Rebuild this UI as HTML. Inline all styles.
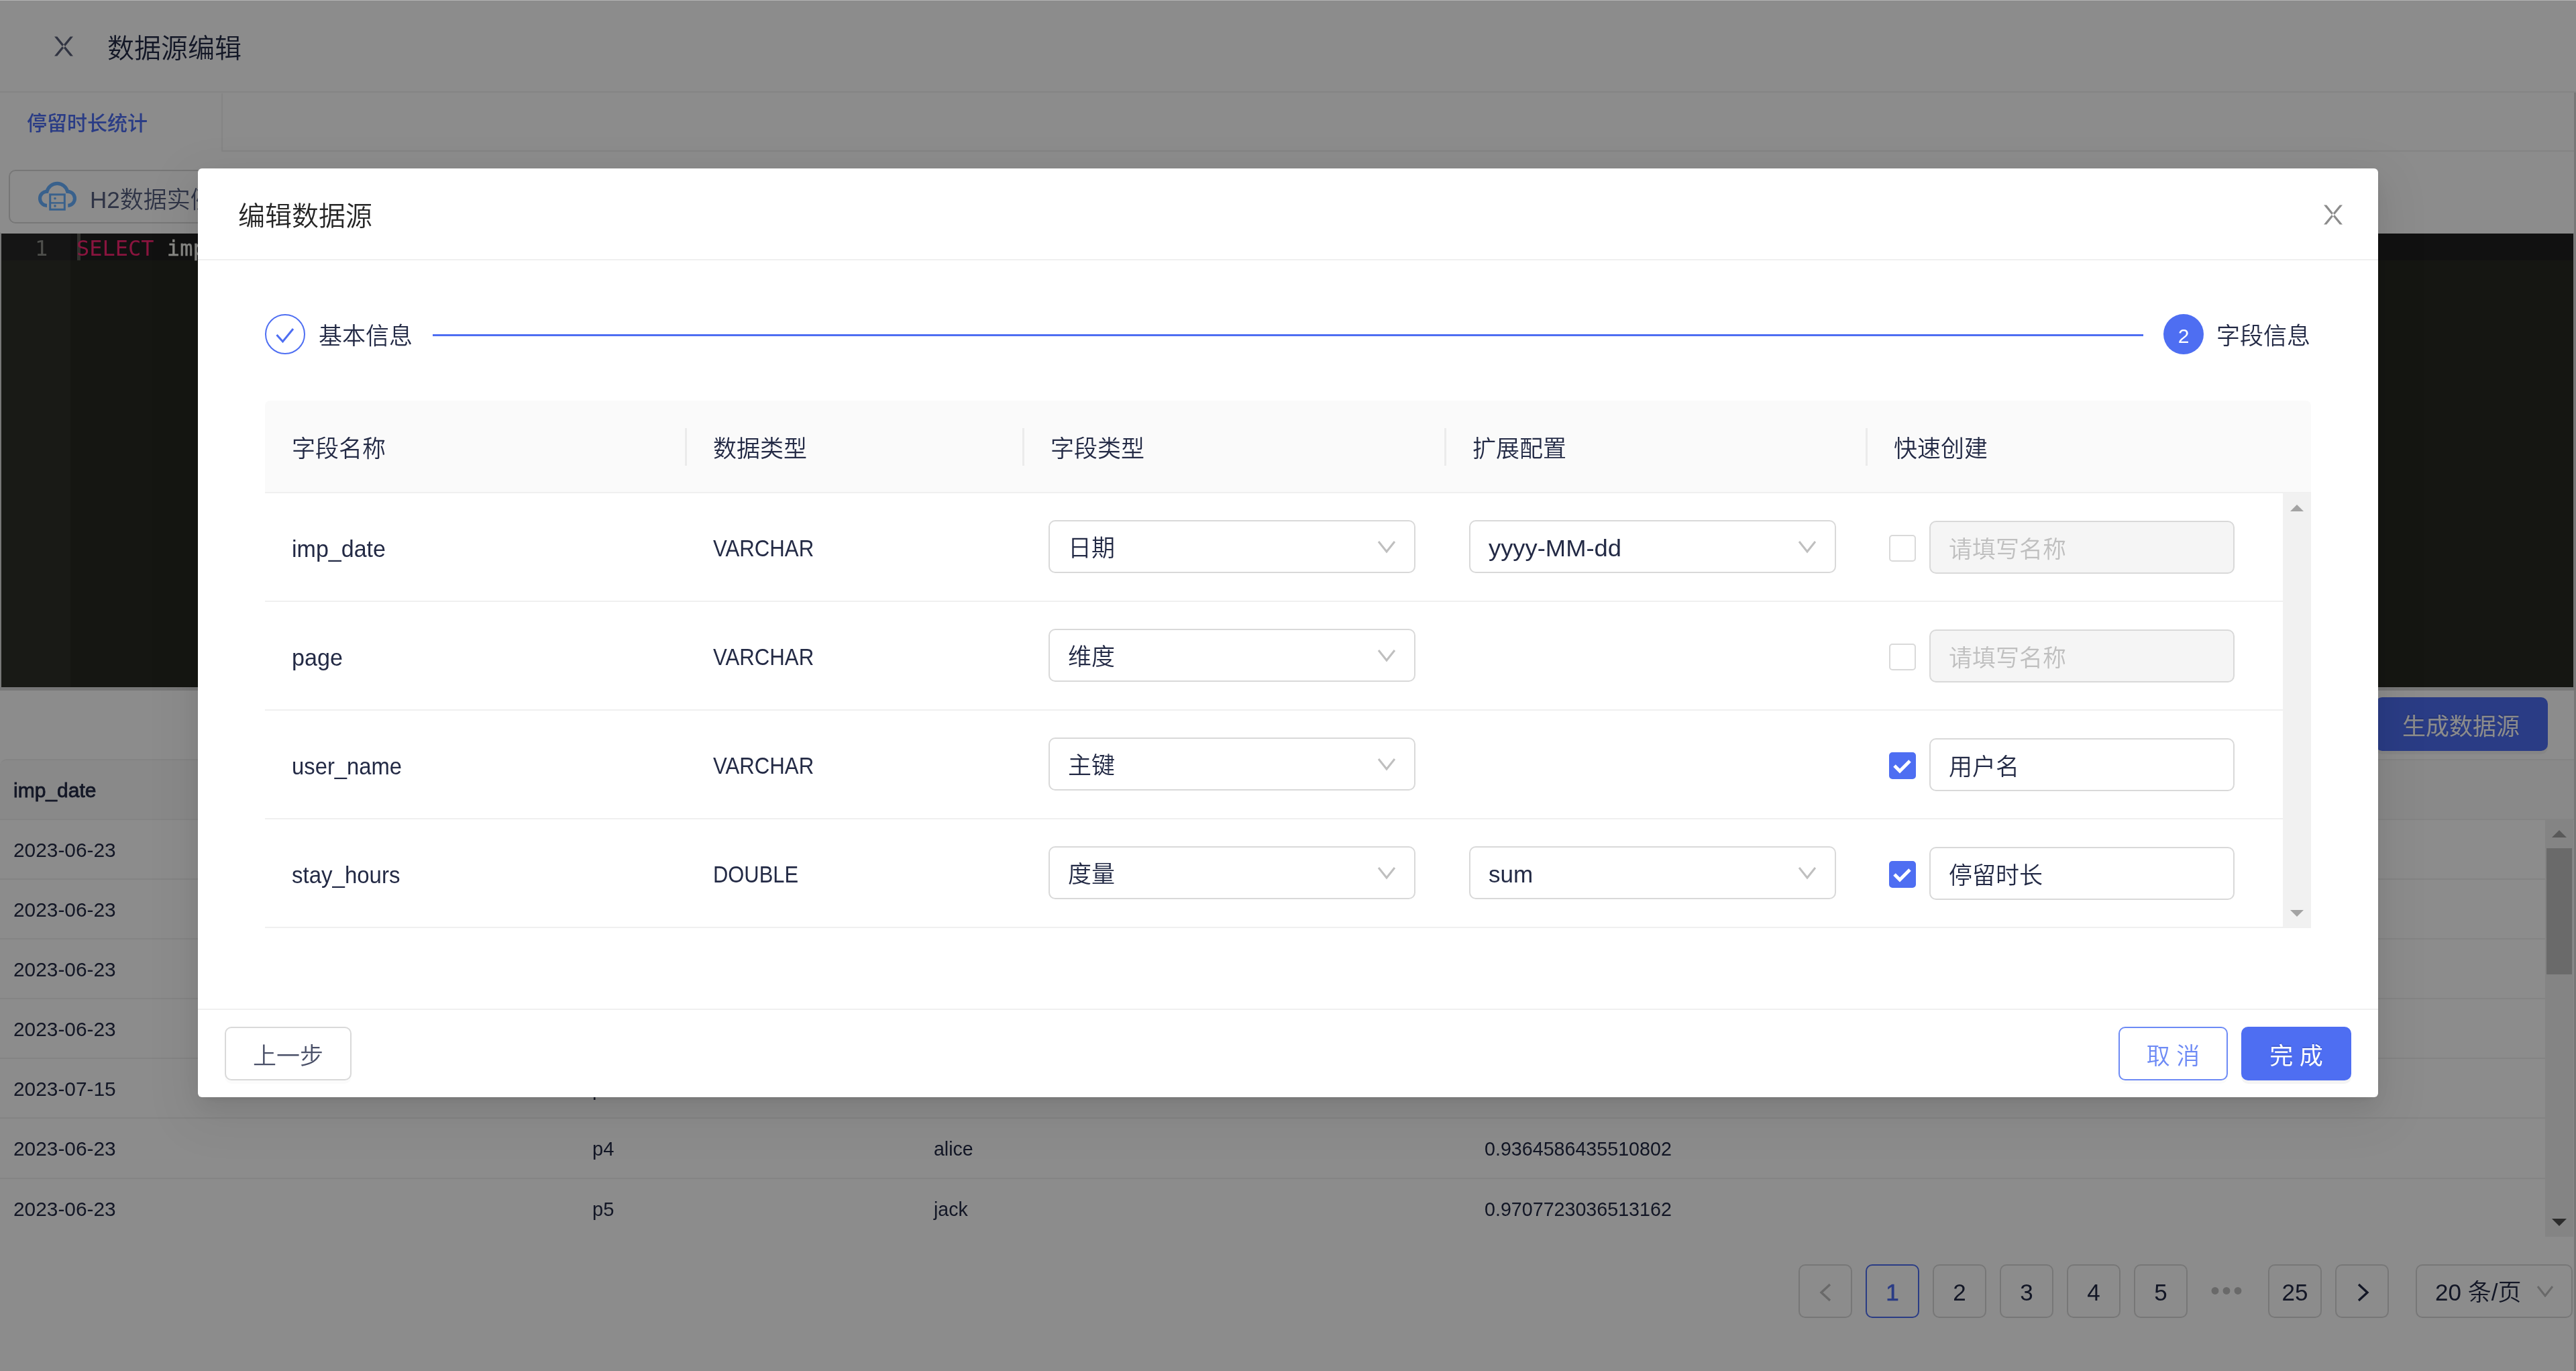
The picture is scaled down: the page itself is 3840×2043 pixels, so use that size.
<!DOCTYPE html>
<html lang="zh-CN">
<head>
<meta charset="utf-8">
<title>数据源编辑</title>
<style>
*{box-sizing:border-box;margin:0;padding:0}
html,body{width:3840px;height:2043px;overflow:hidden;background:#fff}
body{font-family:"Liberation Sans","Noto Sans CJK SC",sans-serif;color:#232a45;position:relative;font-size:35px;font-weight:350}
.abs{position:absolute}
#bg,#modal{will-change:transform}
#bg{position:absolute;left:0;top:0;width:3840px;height:2043px;background:#fff;overflow:hidden}
#mask{position:absolute;left:0;top:0;width:3840px;height:2043px;background:rgba(0,0,0,.45)}
.t{position:absolute;white-space:nowrap;line-height:1}
/* background page */
#topline{left:0;top:0;width:3840px;height:2px;background:#fff}
#hdr{left:0;top:0;width:3840px;height:138px;border-bottom:2px solid #f0f0f0;background:#fff}
#tabs .vline{left:330px;top:139px;width:2px;height:87px;background:#f0f0f0}
#tabs .hline{left:330px;top:224px;width:3510px;height:2px;background:#f0f0f0}
#dbsel{left:13px;top:253px;width:700px;height:80px;border:2px solid #d9d9d9;border-radius:10px;background:#fff}
#editor{left:-3px;top:343px;width:3844px;height:686px;border:5px solid #d9d9d9;border-top-color:#fff;background:#272822}
#editor .gutter{left:0;top:0;width:103px;height:676px;background:#2f3129}
#editor .activeline{left:103px;top:0;width:3731px;height:40px;background:#202020}
#editor .gactive{left:0;top:0;width:103px;height:40px;background:#272727}
#editor .cursor{left:113px;top:0;width:5px;height:40px;background:#5a5a55}
.mono{font-family:"DejaVu Sans Mono","Liberation Mono",monospace;font-size:32px;font-weight:400}
#genbtn{left:3541px;top:1039px;width:257px;height:80px;border-radius:10px;background:#4e6ef2;color:#fff;font-size:35px;font-weight:400;text-shadow:0 -2.5px 0 rgba(0,0,0,.12);box-shadow:0 5px 0 rgba(0,0,0,.045)}
/* bg table */
#btable{left:0;top:1131px;width:3838px;height:713px}
#btable .head{left:0;top:0;width:3837px;height:91px;background:#fafafa;border-top:2px solid #f0f0f0;border-bottom:2px solid #f0f0f0;border-radius:10px 0 0 0}
#btable .row{left:0;width:3794px;height:89px;border-bottom:2px solid #f0f0f0}
#btable .row .t,#btable .head .t{font-size:30px}
#btable .sb{left:3794px;top:90px;width:42px;height:622px;background:#f1f1f1}
#btable .thumb{left:3796px;top:133px;width:38px;height:188px;background:#c1c1c1}
.pg{position:absolute;top:1884px;width:80px;height:80px;border:2px solid #d9d9d9;border-radius:10px;background:#fff;text-align:center;line-height:80px;font-size:35px}
/* modal */
#modal{left:295px;top:251px;width:3250px;height:1384px;background:#fff;border-radius:6px;box-shadow:0 7.5px 15px -10px rgba(0,0,0,.12),0 15px 40px 0 rgba(0,0,0,.08),0 22.5px 70px 20px rgba(0,0,0,.05)}
#mhead{left:0;top:0;width:3250px;height:137px;border-bottom:2px solid #f0f0f0}
#mfoot{left:0;top:1252px;width:3250px;height:132px;border-top:2px solid #f0f0f0}
.btn{position:absolute;height:80px;border-radius:10px;border:2px solid #d9d9d9;background:#fff;text-align:center;line-height:84px;font-size:35px;box-shadow:0 5px 0 rgba(0,0,0,.016)}
#mtable{left:100px;top:346px;width:3050px;height:786px}
#mtable .th{left:0;top:0;width:3050px;height:138px;background:#fafafa;border-bottom:2px solid #f0f0f0;border-radius:8px 8px 0 0}
#mtable .sep{top:41px;width:2.5px;height:56px;background:rgba(0,0,0,.06)}
#mtable .tr{left:0;width:3008px;height:162px;border-bottom:2px solid #f0f0f0}
#mtable .sbar{left:3008px;top:138px;width:42px;height:648px;background:#f1f1f1}
.sel{position:absolute;top:40px;width:547px;height:79px;border:2px solid #d9d9d9;border-radius:10px;background:#fff}
.sel .t{left:27px;top:22px;font-size:35px}
.sel svg{position:absolute;left:488px;top:28px}
.cb{position:absolute;left:2421px;top:62px;width:40px;height:40px;border:2px solid #d9d9d9;border-radius:5px;background:#fff}
.cb.on{background:#4e6ef2;border-color:#4e6ef2}
.inp{position:absolute;left:2481px;top:41px;width:455px;height:79px;border:2px solid #d9d9d9;border-radius:10px;background:#fff}
.inp.dis{background:#f5f5f5}
.inp .t{left:27px;top:23px;font-size:35px}
.inp.dis .t{color:#bfbfbf}
</style>
</head>
<body>
<div id="bg">
  <div id="hdr" class="abs">
    <svg class="abs" style="left:81px;top:54px" width="28" height="30" viewBox="0 0 28 30"><path d="M0 0.5H4.3L28 29.5H23.7Z M28 0.5H23.7L0 29.5H4.3Z" fill="#5a6078"/></svg>
    <div class="t" style="left:160px;top:52px;font-size:40px;color:#232a45">数据源编辑</div>
  </div>
  <div id="tabs">
    <div class="t" style="left:40px;top:169px;font-size:30px;color:#4e6ef2;font-weight:500">停留时长统计</div>
    <div class="abs vline"></div><div class="abs hline"></div>
  </div>
  <div id="dbsel" class="abs">
    <svg class="abs" style="left:41px;top:13px" width="60" height="50" viewBox="0 0 60 50"><path d="M 14.0 38.3 A 10.5 10.5 0 0 1 14.0 17.3 A 15.8 15.8 0 0 1 44.6 17.3 A 10.5 10.5 0 0 1 45.3 38.3" fill="none" stroke="#69b1ff" stroke-width="5.2"/><rect x="18.7" y="21.9" width="21.6" height="22.3" fill="none" stroke="#69b1ff" stroke-width="3"/><path d="M 18.7 34.4 H 40.3" stroke="#69b1ff" stroke-width="2.4" fill="none"/><circle cx="26.0" cy="27.8" r="1.8" fill="#69b1ff"/><circle cx="26.0" cy="38.9" r="1.8" fill="#69b1ff"/></svg>
    <div class="t" style="left:119px;top:25px;font-size:35px;color:#566080">H2数据实例</div>
  </div>
  <div id="editor" class="abs">
    <div class="abs gutter"></div><div class="abs gactive"></div><div class="abs activeline"></div><div class="abs cursor"></div>
    <div class="t mono" style="left:50px;top:6px;color:#8f908a">1</div>
    <div class="t mono" style="left:112px;top:6px;color:#f8f8f2;-webkit-text-stroke:0.4px #f8f8f2"><span style="color:#f92672;-webkit-text-stroke:0">SELECT</span> imp_date, page, user_name, stay_hours <span style="color:#f92672;-webkit-text-stroke:0">FROM</span> s2_stay_time_statis</div>
  </div>
  <div id="genbtn" class="abs"><div class="t" style="left:40px;top:26px">生成数据源</div></div>
  <div id="btable" class="abs">
    <div class="abs head"><div class="t" style="left:20px;top:30px;font-weight:400;-webkit-text-stroke:0.8px #232a45">imp_date</div><div class="t" style="left:882px;top:30px;font-weight:400;-webkit-text-stroke:0.8px #232a45;transform:scaleX(0.976);transform-origin:0 50%">page</div><div class="t" style="left:1392px;top:30px;font-weight:400;-webkit-text-stroke:0.8px #232a45;transform:scaleX(0.937);transform-origin:0 50%">user_name</div><div class="t" style="left:2213px;top:30px;font-weight:400;-webkit-text-stroke:0.8px #232a45;transform:scaleX(0.943);transform-origin:0 50%">stay_hours</div></div>
    <div class="abs row" style="top:91px"><div class="t" style="left:20px;top:30px;transform:scaleX(.995);transform-origin:0 50%">2023-06-23</div><div class="t" style="left:883px;top:30px;transform:scaleX(.97);transform-origin:0 50%">p1</div><div class="t" style="left:1392px;top:30px;transform:scaleX(.951);transform-origin:0 50%">jack</div><div class="t" style="left:2213px;top:30px;transform:scaleX(.955);transform-origin:0 50%">0.7636857512911863</div></div>
    <div class="abs row" style="top:180px"><div class="t" style="left:20px;top:30px;transform:scaleX(.995);transform-origin:0 50%">2023-06-23</div><div class="t" style="left:883px;top:30px;transform:scaleX(.97);transform-origin:0 50%">p2</div><div class="t" style="left:1392px;top:30px;transform:scaleX(.951);transform-origin:0 50%">tom</div><div class="t" style="left:2213px;top:30px;transform:scaleX(.955);transform-origin:0 50%">0.4703966251394113</div></div>
    <div class="abs row" style="top:269px"><div class="t" style="left:20px;top:30px;transform:scaleX(.995);transform-origin:0 50%">2023-06-23</div><div class="t" style="left:883px;top:30px;transform:scaleX(.97);transform-origin:0 50%">p3</div><div class="t" style="left:1392px;top:30px;transform:scaleX(.951);transform-origin:0 50%">lucy</div><div class="t" style="left:2213px;top:30px;transform:scaleX(.955);transform-origin:0 50%">0.8060281420508878</div></div>
    <div class="abs row" style="top:358px"><div class="t" style="left:20px;top:30px;transform:scaleX(.995);transform-origin:0 50%">2023-06-23</div><div class="t" style="left:883px;top:30px;transform:scaleX(.97);transform-origin:0 50%">p1</div><div class="t" style="left:1392px;top:30px;transform:scaleX(.951);transform-origin:0 50%">john</div><div class="t" style="left:2213px;top:30px;transform:scaleX(.955);transform-origin:0 50%">0.6609784680363809</div></div>
    <div class="abs row" style="top:447px"><div class="t" style="left:20px;top:30px;transform:scaleX(.995);transform-origin:0 50%">2023-07-15</div><div class="t" style="left:883px;top:30px;transform:scaleX(.97);transform-origin:0 50%">p3</div><div class="t" style="left:1392px;top:30px;transform:scaleX(.951);transform-origin:0 50%">dean</div><div class="t" style="left:2213px;top:30px;transform:scaleX(.955);transform-origin:0 50%">0.1291416173271438</div></div>
    <div class="abs row" style="top:536px;height:90px"><div class="t" style="left:20px;top:30px;transform:scaleX(.995);transform-origin:0 50%">2023-06-23</div><div class="t" style="left:883px;top:30px;transform:scaleX(.97);transform-origin:0 50%">p4</div><div class="t" style="left:1392px;top:30px;transform:scaleX(.951);transform-origin:0 50%">alice</div><div class="t" style="left:2213px;top:30px;transform:scaleX(.955);transform-origin:0 50%">0.9364586435510802</div></div>
    <div class="abs row" style="top:626px;border-bottom:none"><div class="t" style="left:20px;top:30px;transform:scaleX(.995);transform-origin:0 50%">2023-06-23</div><div class="t" style="left:883px;top:30px;transform:scaleX(.97);transform-origin:0 50%">p5</div><div class="t" style="left:1392px;top:30px;transform:scaleX(.951);transform-origin:0 50%">jack</div><div class="t" style="left:2213px;top:30px;transform:scaleX(.955);transform-origin:0 50%">0.9707723036513162</div></div>
    <div class="abs sb"></div><div class="abs thumb"></div>
    <svg class="abs" style="left:3804px;top:105px" width="22" height="12" viewBox="0 0 22 12"><path d="M0 12 L11 1 L22 12Z" fill="#a3a3a3"/></svg>
    <svg class="abs" style="left:3804px;top:685px" width="22" height="12" viewBox="0 0 22 12"><path d="M0 0 L11 11 L22 0Z" fill="#505050"/></svg>
  </div>
  <div id="pager">
    <div class="pg" style="left:2681px"><svg width="20" height="30" viewBox="0 0 20 30" style="position:absolute;left:28px;top:25px"><path d="M17 3 L4 15 L17 27" fill="none" stroke="#bfbfbf" stroke-width="3.4"/></svg></div>
    <div class="pg" style="left:2781px;border-color:#4e6ef2;color:#4e6ef2;-webkit-text-stroke:0.7px #4e6ef2">1</div>
    <div class="pg" style="left:2881px">2</div>
    <div class="pg" style="left:2981px">3</div>
    <div class="pg" style="left:3081px">4</div>
    <div class="pg" style="left:3181px">5</div>
    <div class="t" style="left:3295px;top:1903px;font-size:40px;color:#bfbfbf;letter-spacing:3px">•••</div>
    <div class="pg" style="left:3381px">25</div>
    <div class="pg" style="left:3481px"><svg width="20" height="30" viewBox="0 0 20 30" style="position:absolute;left:30px;top:25px"><path d="M3 3 L16 15 L3 27" fill="none" stroke="#232a45" stroke-width="3.4"/></svg></div>
    <div class="pg" style="left:3601px;width:234px;text-align:left;padding-left:27px">20 条/页<svg class="abs" style="left:178px;top:29px" width="26" height="18" viewBox="0 0 26 18"><path d="M2 2 L13 16 L24 2" fill="none" stroke="#bfbfbf" stroke-width="3"/></svg></div>
  </div>
  <div class="abs" style="left:3837px;top:138px;width:3px;height:1905px;background:#d9d9d9"></div>
</div>
<div id="mask"></div>
<div class="abs" style="left:0;top:0;width:3840px;height:1px;background:#b4b4b4"></div>
<div id="modal" class="abs">
  <div id="mhead" class="abs"><div class="t" style="left:60px;top:51px;font-size:40px;color:#262626">编辑数据源</div>
    <svg class="abs" style="left:3169px;top:54px" width="28" height="30" viewBox="0 0 28 30"><path d="M0 0.5H4.2L28 29.5H23.8Z M28 0.5H23.8L0 29.5H4.2Z" fill="#8c8c8c"/></svg>
  </div>
  <!-- steps -->
  <div class="abs" style="left:100px;top:217px;width:60px;height:60px;border:2.5px solid #4e6ef2;border-radius:50%"><svg class="abs" style="left:14px;top:18px" width="28" height="24" viewBox="0 0 28 24"><path d="M1.5 11 L10.5 21 L26 2" fill="none" stroke="#4e6ef2" stroke-width="3"/></svg></div>
  <div class="t" style="left:180px;top:232px;font-size:35px">基本信息</div>
  <div class="abs" style="left:350px;top:247px;width:2550px;height:2.5px;background:#4e6ef2"></div>
  <div class="abs" style="left:2930px;top:217px;width:60px;height:60px;background:#4e6ef2;border-radius:50%;color:#fff;text-align:center;font-size:30px;line-height:65px">2</div>
  <div class="t" style="left:3009px;top:232px;font-size:35px">字段信息</div>
  <!-- table -->
  <div id="mtable" class="abs">
    <div class="abs th">
      <div class="t" style="left:40px;top:54px">字段名称</div><div class="abs sep" style="left:626px"></div>
      <div class="t" style="left:668px;top:54px">数据类型</div><div class="abs sep" style="left:1129px"></div>
      <div class="t" style="left:1171px;top:54px">字段类型</div><div class="abs sep" style="left:1758px"></div>
      <div class="t" style="left:1800px;top:54px">扩展配置</div><div class="abs sep" style="left:2386px"></div>
      <div class="t" style="left:2428px;top:54px">快速创建</div>
    </div>
    <div class="abs tr" style="top:138px"><div class="t" style="left:40px;top:65px;transform:scaleX(0.972);transform-origin:0 50%">imp_date</div><div class="t" style="left:668px;top:64px;transform:scaleX(0.891);transform-origin:0 50%">VARCHAR</div>
      <div class="sel" style="left:1168px"><div class="t">日期</div><svg width="28" height="20" viewBox="0 0 28 20"><path d="M2 2 L14 17 L26 2" fill="none" stroke="#bfbfbf" stroke-width="3"/></svg></div>
      <div class="sel" style="left:1795px"><div class="t" style="transform:scaleX(1.039);transform-origin:0 50%">yyyy-MM-dd</div><svg width="28" height="20" viewBox="0 0 28 20"><path d="M2 2 L14 17 L26 2" fill="none" stroke="#bfbfbf" stroke-width="3"/></svg></div>
      <div class="cb"></div><div class="inp dis"><div class="t">请填写名称</div></div>
    </div>
    <div class="abs tr" style="top:300px"><div class="t" style="left:40px;top:65px;transform:scaleX(0.976);transform-origin:0 50%">page</div><div class="t" style="left:668px;top:64px;transform:scaleX(0.891);transform-origin:0 50%">VARCHAR</div>
      <div class="sel" style="left:1168px"><div class="t">维度</div><svg width="28" height="20" viewBox="0 0 28 20"><path d="M2 2 L14 17 L26 2" fill="none" stroke="#bfbfbf" stroke-width="3"/></svg></div>
      <div class="cb"></div><div class="inp dis"><div class="t">请填写名称</div></div>
    </div>
    <div class="abs tr" style="top:462px"><div class="t" style="left:40px;top:65px;transform:scaleX(0.937);transform-origin:0 50%">user_name</div><div class="t" style="left:668px;top:64px;transform:scaleX(0.891);transform-origin:0 50%">VARCHAR</div>
      <div class="sel" style="left:1168px"><div class="t">主键</div><svg width="28" height="20" viewBox="0 0 28 20"><path d="M2 2 L14 17 L26 2" fill="none" stroke="#bfbfbf" stroke-width="3"/></svg></div>
      <div class="cb on"><svg class="abs" style="left:4px;top:8px" width="27" height="22" viewBox="0 0 27 22"><path d="M2 10 L10 18 L25 3" fill="none" stroke="#fff" stroke-width="5"/></svg></div><div class="inp"><div class="t">用户名</div></div>
    </div>
    <div class="abs tr" style="top:624px"><div class="t" style="left:40px;top:65px;transform:scaleX(0.943);transform-origin:0 50%">stay_hours</div><div class="t" style="left:668px;top:64px;transform:scaleX(0.883);transform-origin:0 50%">DOUBLE</div>
      <div class="sel" style="left:1168px"><div class="t">度量</div><svg width="28" height="20" viewBox="0 0 28 20"><path d="M2 2 L14 17 L26 2" fill="none" stroke="#bfbfbf" stroke-width="3"/></svg></div>
      <div class="sel" style="left:1795px"><div class="t">sum</div><svg width="28" height="20" viewBox="0 0 28 20"><path d="M2 2 L14 17 L26 2" fill="none" stroke="#bfbfbf" stroke-width="3"/></svg></div>
      <div class="cb on"><svg class="abs" style="left:4px;top:8px" width="27" height="22" viewBox="0 0 27 22"><path d="M2 10 L10 18 L25 3" fill="none" stroke="#fff" stroke-width="5"/></svg></div><div class="inp"><div class="t">停留时长</div></div>
    </div>
    <div class="abs sbar"></div>
    <svg class="abs" style="left:3019px;top:154px" width="20" height="11" viewBox="0 0 20 11"><path d="M0 11 L10 1 L20 11Z" fill="#a3a3a3"/></svg>
    <svg class="abs" style="left:3019px;top:759px" width="20" height="11" viewBox="0 0 20 11"><path d="M0 0 L10 10 L20 0Z" fill="#a3a3a3"/></svg>
    <div class="abs" style="left:3008px;top:784px;width:42px;height:2px;background:#f0f0f0"></div>
  </div>
  <div id="mfoot" class="abs">
    <div class="btn" style="left:40px;top:25px;width:189px;color:#4a5068">上一步</div>
    <div class="btn" style="left:2863px;top:25px;width:163px;color:#6d8af5;border-color:#6d8af5">取 消</div>
    <div class="btn" style="left:3046px;top:25px;width:164px;color:#fff;background:#4e6ef2;border-color:#4e6ef2;box-shadow:0 5px 0 rgba(0,0,0,.045);text-shadow:0 -2.5px 0 rgba(0,0,0,.12);font-weight:400">完 成</div>
  </div>
</div>
</body>
</html>
